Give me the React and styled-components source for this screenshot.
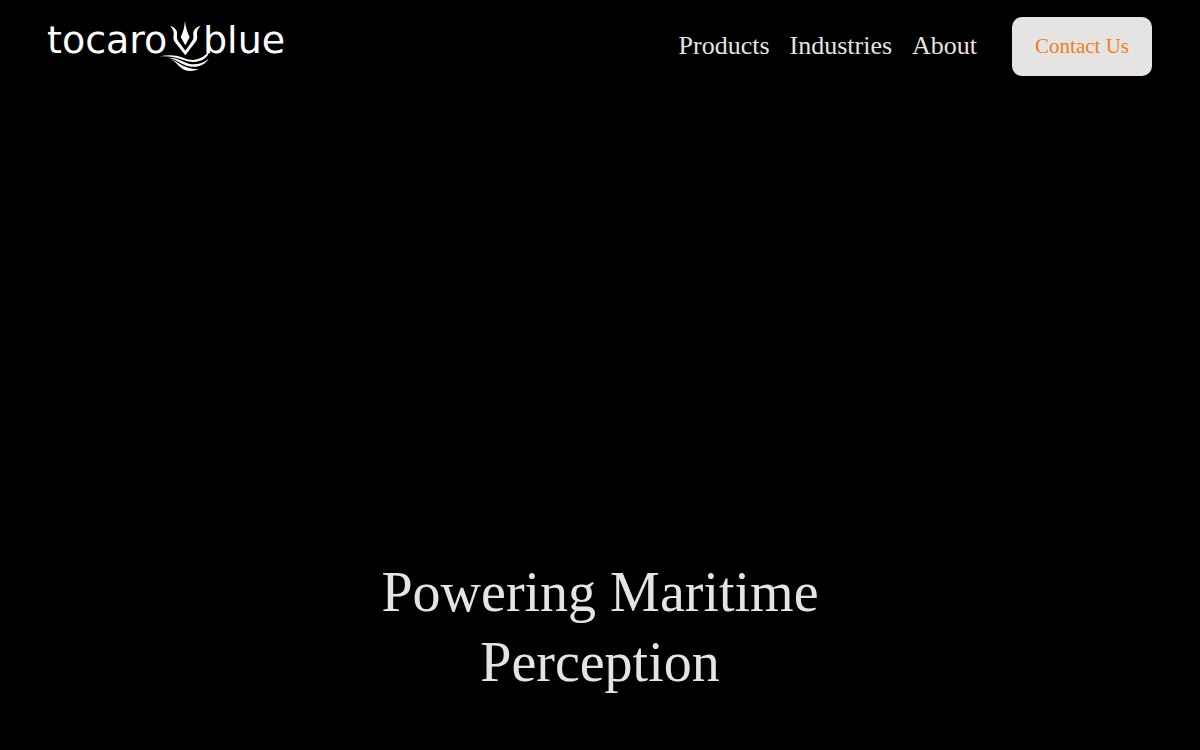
import React from "react";
import styled, { createGlobalStyle } from "styled-components";

const light = "#e5e4e2";
const accent = "#ee7d22";

const links = [
  { label: "Products", href: "#products" },
  { label: "Industries", href: "#industries" },
  { label: "About", href: "#about" },
];

function Logo() {
  return (
    <LogoSvg viewBox="0 -4 244 59" role="img" aria-label="tocaro blue">
      <LogoText x="-1" y="32">tocaro</LogoText>
      <LogoText x="155" y="32">blue</LogoText>
      <g transform="translate(107 -6) scale(0.3333)" fill="#fff">
        <path d="M90 17C92 38 98 53 104 66L91 91L77 66C84 53 88 38 90 17Z" />
        <path d="M45 32C61 37 68 47 66 59C65 67 66 73 70 79L91 107L111 79C115 73 116 67 115 59C113 47 121 37 137 32C129 41 124 50 126 60C128 70 125 77 121 82L91 121L60 82C56 77 54 70 56 60C58 50 53 41 45 32Z" />
        <path d="M14 124C45 118 67 121 88 130C114 140 143 135 164 106C159 137 121 148 88 136C62 126 43 123 14 124Z" />
        <path d="M38 128C62 127 77 136 93 143C114 152 141 148 161 131C146 156 115 161 88 149C70 141 60 132 38 128Z" />
        <path d="M46 132C68 137 83 163 132 162C108 173 86 168 71 152C62 143 57 137 46 132Z" />
      </g>
    </LogoSvg>
  );
}

function App() {
  return (
    <Page>
      <GlobalStyle />
      <Header>
        <LogoLink href="#home">
          <Logo />
        </LogoLink>
        <Menu>
          <Nav>
            {links.map((el) => (
              <NavLink key={el.label} href={el.href}>{el.label}</NavLink>
            ))}
          </Nav>
          <ContactButton type="button">Contact Us</ContactButton>
        </Menu>
      </Header>
      <Hero>
        <Title>Powering Maritime Perception</Title>
      </Hero>
    </Page>
  );
}

const GlobalStyle = createGlobalStyle`
  * {
    box-sizing: border-box;
  }
  body {
    margin: 0;
    background: #000;
    color: ${light};
    font-family: "Liberation Serif", "Times New Roman", serif;
  }
`;

const Page = styled.div`
  display: flex;
  flex-direction: column;
  min-height: 100vh;
`;

const Header = styled.header`
  display: flex;
  flex-wrap: wrap;
  align-items: center;
  justify-content: space-between;
  padding: 17px 48px;
`;

const LogoLink = styled.a`
  display: block;
`;

const LogoSvg = styled.svg`
  display: block;
  width: 244px;
  height: 59px;
  overflow: visible;
`;

const LogoText = styled.text`
  fill: #fff;
  font-family: "DejaVu Sans", sans-serif;
  font-size: 38px;
`;

const Menu = styled.div`
  display: flex;
  flex-wrap: wrap;
  align-items: center;
  gap: 35px;
`;

const Nav = styled.nav`
  display: flex;
  gap: 20px;
`;

const NavLink = styled.a`
  color: ${light};
  font-size: 26px;
  line-height: 30px;
  padding-bottom: 2px;
  text-decoration: none;
  &:hover {
    color: ${accent};
  }
`;

const ContactButton = styled.button`
  background: ${light};
  border: 0;
  border-radius: 10px;
  color: ${accent};
  cursor: pointer;
  font-family: inherit;
  font-size: 21px;
  line-height: 27px;
  padding: 16px 23px;
`;

const Hero = styled.main`
  display: flex;
  flex: 1;
  align-items: flex-end;
  justify-content: center;
  padding: 48px 24px 53px;
`;

const Title = styled.h1`
  font-size: 56px;
  font-weight: 400;
  line-height: 70px;
  margin: 0;
  max-width: 600px;
  text-align: center;
`;

export default App;
